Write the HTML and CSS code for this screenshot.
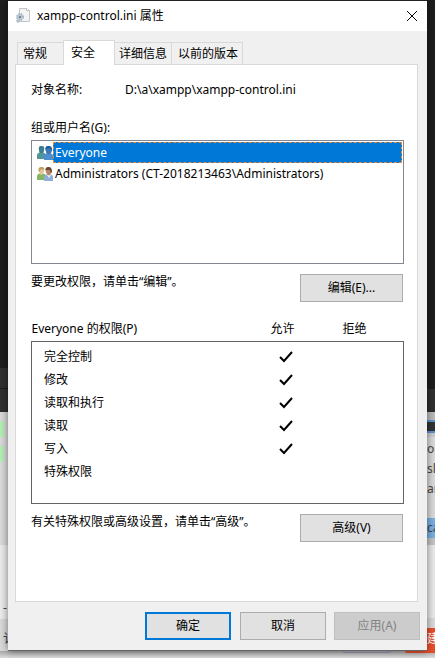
FILE: index.html
```html
<!DOCTYPE html>
<html lang="zh-CN">
<head>
	<meta charset="UTF-8">
	<title>xampp-control.ini 属性</title>
	<link rel="stylesheet" href="styles.css">
</head>
<body>
	<div class="desktop">
		<div class="side left" aria-hidden="true">
			<div class="dark tall"></div>
			<div class="bar"></div>
			<div class="page">
				<i class="green"></i>
				<i class="green"></i>
			</div>
			<div class="page light"><span>-</span></div>
			<div class="page"><span>讠</span></div>
		</div>

		<main class="dialog">
			<header class="title">
				<svg class="file" width="16" height="16" viewBox="0 0 16 16">
					<path d="M3.500 .5h7l3 2v11h-10z" fill="#f4f4f4" stroke="#c3c6c8"/>
					<path d="M10.500 .5v2h3" fill="#fff" stroke="#b9bcbe"/>
					<circle cx="4" cy="9" r="3" fill="#c6d2db" stroke="#a9b8c4" stroke-dasharray="1.600 .8" stroke-width="2"/>
					<circle cx="2" cy="13" r="1.500" fill="#b7c5cf" stroke="#a9b8c4" stroke-dasharray="1.200 .8"/>
					<circle cx="4" cy="9" r="1.200" fill="#71818d"/>
				</svg>
				<h1>xampp-control.ini 属性</h1>
				<button class="close" aria-label="关闭">
					<svg width="12" height="12" viewBox="0 0 12 12"><path d="M1 1l10 10M11 1L1 11" stroke="#000"/></svg>
				</button>
			</header>

			<nav class="tabs" role="tablist">
				<button role="tab" class="tab first">常规</button>
				<button role="tab" class="tab current" aria-selected="true">安全</button>
				<button role="tab" class="tab">详细信息</button>
				<button role="tab" class="tab">以前的版本</button>
			</nav>

			<section class="panel">
				<div class="object">
					<span>对象名称:</span>
					<span>D:\a\xampp\xampp-control.ini</span>
				</div>

				<div class="label" id="users">组或用户名(G):</div>
				<ul class="list" role="listbox" aria-labelledby="users">
					<li role="option" aria-selected="true">
						<svg width="16" height="16" viewBox="0 0 16 16">
							<path d="M0 14v-4q0-2 2.500-2.500L2 5Q1 1 4.500 1T7 5l-.5 3Q9 8 9 10v4z" fill="#4f969c"/>
							<path d="M2 5Q1 1 4.500 1T7 5L6 8H3z" fill="#3b7f91"/>
							<path d="M7 15v-4q0-2 2.500-2.500L8.500 5q-.5-4 3-4T15 5l-1 3.500q2 .5 2 2.500v4z" fill="#4b8fd0"/>
							<path d="M8.500 5q-.5-4 3-4T15 5l-1.500 3.500-1.500 1-2-1z" fill="#3a79b8"/>
							<path d="M8.500 4q0-3 3-3T15 5l-3-2z" fill="#245b93"/>
						</svg>
						<span class="name selected">Everyone</span>
					</li>
					<li role="option">
						<svg width="16" height="16" viewBox="0 0 16 16">
							<path d="M0 14v-4q0-2 2.500-2.500h4Q9 8 9 10v4z" fill="#86b566"/>
							<path d="M2 5Q1 1 4.500 1T7 5L6 8l-1.500 1L3 8z" fill="#e3c79a"/>
							<path d="M1.500 5Q1 1 4.500 1T7 4L4 3 2.500 6z" fill="#b9a05b"/>
							<path d="M7 15v-4q0-2 2.500-2.500H14q2 .5 2 2.500v4z" fill="#8eb0da"/>
							<path d="M10 9l2 3 2-3z" fill="#edf2f7"/>
							<path d="M8.500 5q-.5-4 3-4T15 5l-1.500 3.500-1.500 1-2-1z" fill="#b98560"/>
							<path d="M8.500 4q0-3 3-3T15 6l-1 1-1-3z" fill="#65483a"/>
						</svg>
						<span class="name">Administrators (CT-2018213463\Administrators)</span>
					</li>
				</ul>

				<div class="hint">
					<p>要更改权限，请单击“编辑”。</p>
					<button class="btn wide">编辑(E)...</button>
				</div>

				<table class="perms">
					<thead>
						<tr><th class="what">Everyone 的权限(P)</th><th class="col">允许</th><th class="col">拒绝</th><th class="end"></th></tr>
					</thead>
					<tbody>
						<tr><td>完全控制</td><td class="yes"><svg aria-label="允许" width="14" height="12" viewBox="0 0 14 12"><path d="M1 6l4 4 8-9"/></svg></td><td></td><td></td></tr>
						<tr><td>修改</td><td class="yes"><svg aria-label="允许" width="14" height="12" viewBox="0 0 14 12"><path d="M1 6l4 4 8-9"/></svg></td><td></td><td></td></tr>
						<tr><td>读取和执行</td><td class="yes"><svg aria-label="允许" width="14" height="12" viewBox="0 0 14 12"><path d="M1 6l4 4 8-9"/></svg></td><td></td><td></td></tr>
						<tr><td>读取</td><td class="yes"><svg aria-label="允许" width="14" height="12" viewBox="0 0 14 12"><path d="M1 6l4 4 8-9"/></svg></td><td></td><td></td></tr>
						<tr><td>写入</td><td class="yes"><svg aria-label="允许" width="14" height="12" viewBox="0 0 14 12"><path d="M1 6l4 4 8-9"/></svg></td><td></td><td></td></tr>
						<tr><td>特殊权限</td><td></td><td></td><td></td></tr>
					</tbody>
				</table>

				<div class="hint last">
					<p>有关特殊权限或高级设置，请单击“高级”。</p>
					<button class="btn wide">高级(V)</button>
				</div>
			</section>

			<footer class="actions">
				<button class="btn default">确定</button>
				<button class="btn">取消</button>
				<button class="btn" disabled>应用(A)</button>
			</footer>
		</main>

		<div class="side right" aria-hidden="true">
			<div class="dark taller"></div>
			<div class="bar"></div>
			<div class="toolbar"></div>
			<div class="page words"><span>or</span><span>sl</span><span>ar</span></div>
			<div class="picked"><span>ca</span></div>
			<div class="page rest"></div>
			<div class="red"><span>建</span></div>
		</div>
		<div class="under" aria-hidden="true"><i class="pill"></i><i class="red-end"></i></div>
	</div>
</body>
</html>
```

FILE: styles.css
```css
* {margin: 0;padding: 0;box-sizing: border-box;}
body {
	font: 12px/16px "Noto Sans", "Noto Sans CJK SC", sans-serif;
	color: #000;
	background: #ddd;
}
button {font: inherit;color: inherit;}
svg {display: block;flex: none;}

.desktop {
	display: grid;
	grid-template-columns: 8px minmax(0, 1fr) 8px;
	min-height: 100vh;
	overflow: hidden;
}

/* windows behind the dialog */
.side {display: flex;flex-direction: column;overflow: hidden;color: #444;}
.dark {background: #1e1e1e;}
.tall {height: 368px;}
.taller {height: 389px;}
.bar {height: 23px;background: #303030;}
.left .bar {height: 44px;background: linear-gradient(#303030 20px, #1c1c1c 20px, #1c1c1c 21px, #303030 21px);}
.page {background: #dadada;}
.left .page {height: 133px;padding-top: 9px;}
.left .light {height: 74px;background: #ececec;padding-top: 55px;}
.left .page:last-child {height: auto;flex: 1;padding-top: 12px;}
.left .page span {display: block;padding-left: 3px;}
.green {display: block;width: 4px;height: 16px;margin-bottom: 9px;background: #b5efb5;}
.toolbar {height: 25px;background: linear-gradient(#bbb 8px, #5b91d0 8px, #5b91d0 10px, #333 10px, #333 19px, #5b91d0 19px, #5b91d0 21px, #ccc 21px);}
.words {height: 81px;padding-top: 4px;}
.words span {display: block;height: 20px;}
.picked {height: 20px;background: #78b0e3;line-height: 20px;}
.rest {height: 90px;background: linear-gradient(#c4c4c4 7px, #e9e9e9 7px, #e9e9e9 80px, #dadada 80px);}
.red {flex: 1;background: #e94f2b;color: #fff;line-height: 22px;}
.under {grid-column: 1 / -1;height: 7px;display: flex;justify-content: flex-end;background: linear-gradient(#aaa, #ddd);}
.pill {width: 48px;height: 2px;margin-right: 14px;border: solid #9798b5;border-width: 0 1px 1px;border-radius: 0 0 12px 12px;}
.red-end {width: 30px;height: 2px;background: #e94f2b;border-radius: 0 0 0 12px;}

.dialog {
	position: relative;
	border-top: 1px solid #222;
	border-bottom: 1px solid #666;
	box-shadow: 0 0 8px rgba(0, 0, 0, .5);
	background: #f0f0f0;
}
.title {height: 30px;display: flex;align-items: center;padding: 0 9px 0 8px;background: #fff;}
.title h1 {flex: 1;font-size: 12px;font-weight: normal;padding-left: 5px;}
.close {border: 0;background: none;}

.tabs {display: flex;align-items: flex-end;height: 34px;padding: 0 9px;margin-bottom: -1px;position: relative;}
.tab {height: 23px;padding: 0 4px;border: 1px solid #d9d9d9;border-left: 0;background: #f0f0f0;white-space: nowrap;}
.tab.first {border-left: 1px solid #d9d9d9;padding: 0 16px 0 5px;border-right: 0;}
.tab.current {height: 25px;padding: 0 19px 1px 7px;border-left: 1px solid #d9d9d9;border-bottom: 0;background: #fff;}
.tab:last-child {padding-left: 6px;}

.panel {margin: 0 9px 0 7px;padding: 17px 13px 0 15px;border: 1px solid #d9d9d9;background: #fff;}
.object {display: flex;}
.object span:first-child {width: 94px;}
.label {margin-top: 22px;}
.list {height: 124px;margin-top: 4px;padding: 1px;border: 1px solid #828790;list-style: none;}
.list li {display: flex;align-items: center;padding-left: 4px;}
.name {flex: 1;height: 21px;padding-left: 2px;line-height: 21px;white-space: nowrap;}
.selected {background: #0078d7;color: #fff;outline: 1px dashed #e08a3c;outline-offset: -1px;}
.hint {display: flex;justify-content: space-between;align-items: flex-start;padding: 10px 1px 0 0;}
.hint.last {padding-bottom: 59px;}

.btn {width: 86px;height: 28px;border: 1px solid #adadad;background: #e1e1e1;}
.btn.wide {width: 103px;}
.btn.default {border: 2px solid #0078d7;}
.btn:disabled {border-color: #bfbfbf;background: #ccc;color: #838383;}

.perms {width: 100%;margin-top: 16px;border-collapse: collapse;table-layout: fixed;}
.perms th {height: 23px;padding-top: 3px;font-weight: normal;vertical-align: top;}
.perms .what {text-align: left;}
.perms .col {width: 72px;}
.perms .end {width: 13px;}
.perms tbody {border: 1px solid #646464;}
.perms td {height: 23px;padding-left: 12px;}
.perms tr:first-child td {height: 27px;padding-top: 4px;}
.perms tr:last-child td {height: 43px;padding-bottom: 19px;}
.perms .yes {padding-left: 32px;}
.yes svg {fill: none;stroke: #000;stroke-width: 2;}

.actions {display: flex;justify-content: flex-end;gap: 8px;padding: 10px 7px;}
.actions .default {margin-right: 1px;}
```
